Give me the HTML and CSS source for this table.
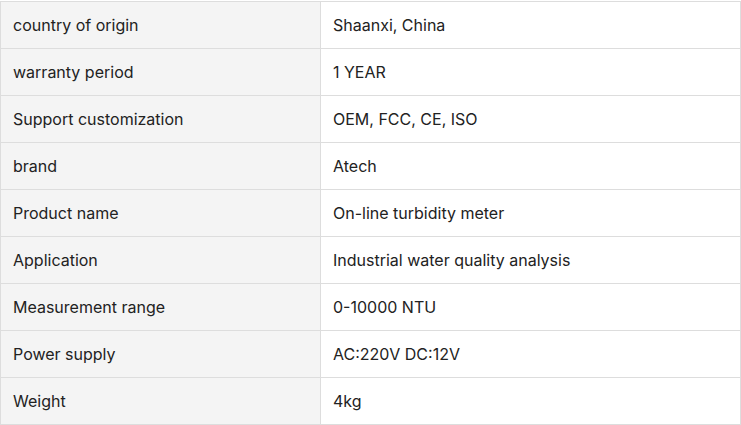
FILE: index.html
```html
<!DOCTYPE html>
<html>
<head>
<meta charset="utf-8">
<link rel="stylesheet" href="styles.css">
</head>
<body>
<table class="spec">
  <tr><td class="k">country of origin</td><td class="v">Shaanxi, China</td></tr>
  <tr><td class="k">warranty period</td><td class="v">1 YEAR</td></tr>
  <tr><td class="k">Support customization</td><td class="v">OEM, FCC, CE, ISO</td></tr>
  <tr><td class="k">brand</td><td class="v">Atech</td></tr>
  <tr><td class="k">Product name</td><td class="v">On-line turbidity meter</td></tr>
  <tr><td class="k">Application</td><td class="v">Industrial water quality analysis</td></tr>
  <tr><td class="k">Measurement range</td><td class="v">0-10000 NTU</td></tr>
  <tr><td class="k">Power supply</td><td class="v">AC:220V DC:12V</td></tr>
  <tr><td class="k">Weight</td><td class="v">4kg</td></tr>
</table>
</body>
</html>
```
FILE: styles.css
```css
html, body {
  margin: 0;
  padding: 0;
  background: #fff;
}
body {
  padding-top: 1px;
  font-family: Inter, "Noto Sans", sans-serif;
  font-size: 16px;
  color: #222;
}
.spec {
  border-collapse: collapse;
  width: 741px;
  table-layout: fixed;
}
.spec td {
  border: 1px solid #dddddd;
  height: 47px;
  padding: 0 12px;
  box-sizing: border-box;
  vertical-align: middle;
}
.spec .k {
  width: 320px;
  background: #f4f4f4;
}
.spec .v {
  background: #fff;
}
```
